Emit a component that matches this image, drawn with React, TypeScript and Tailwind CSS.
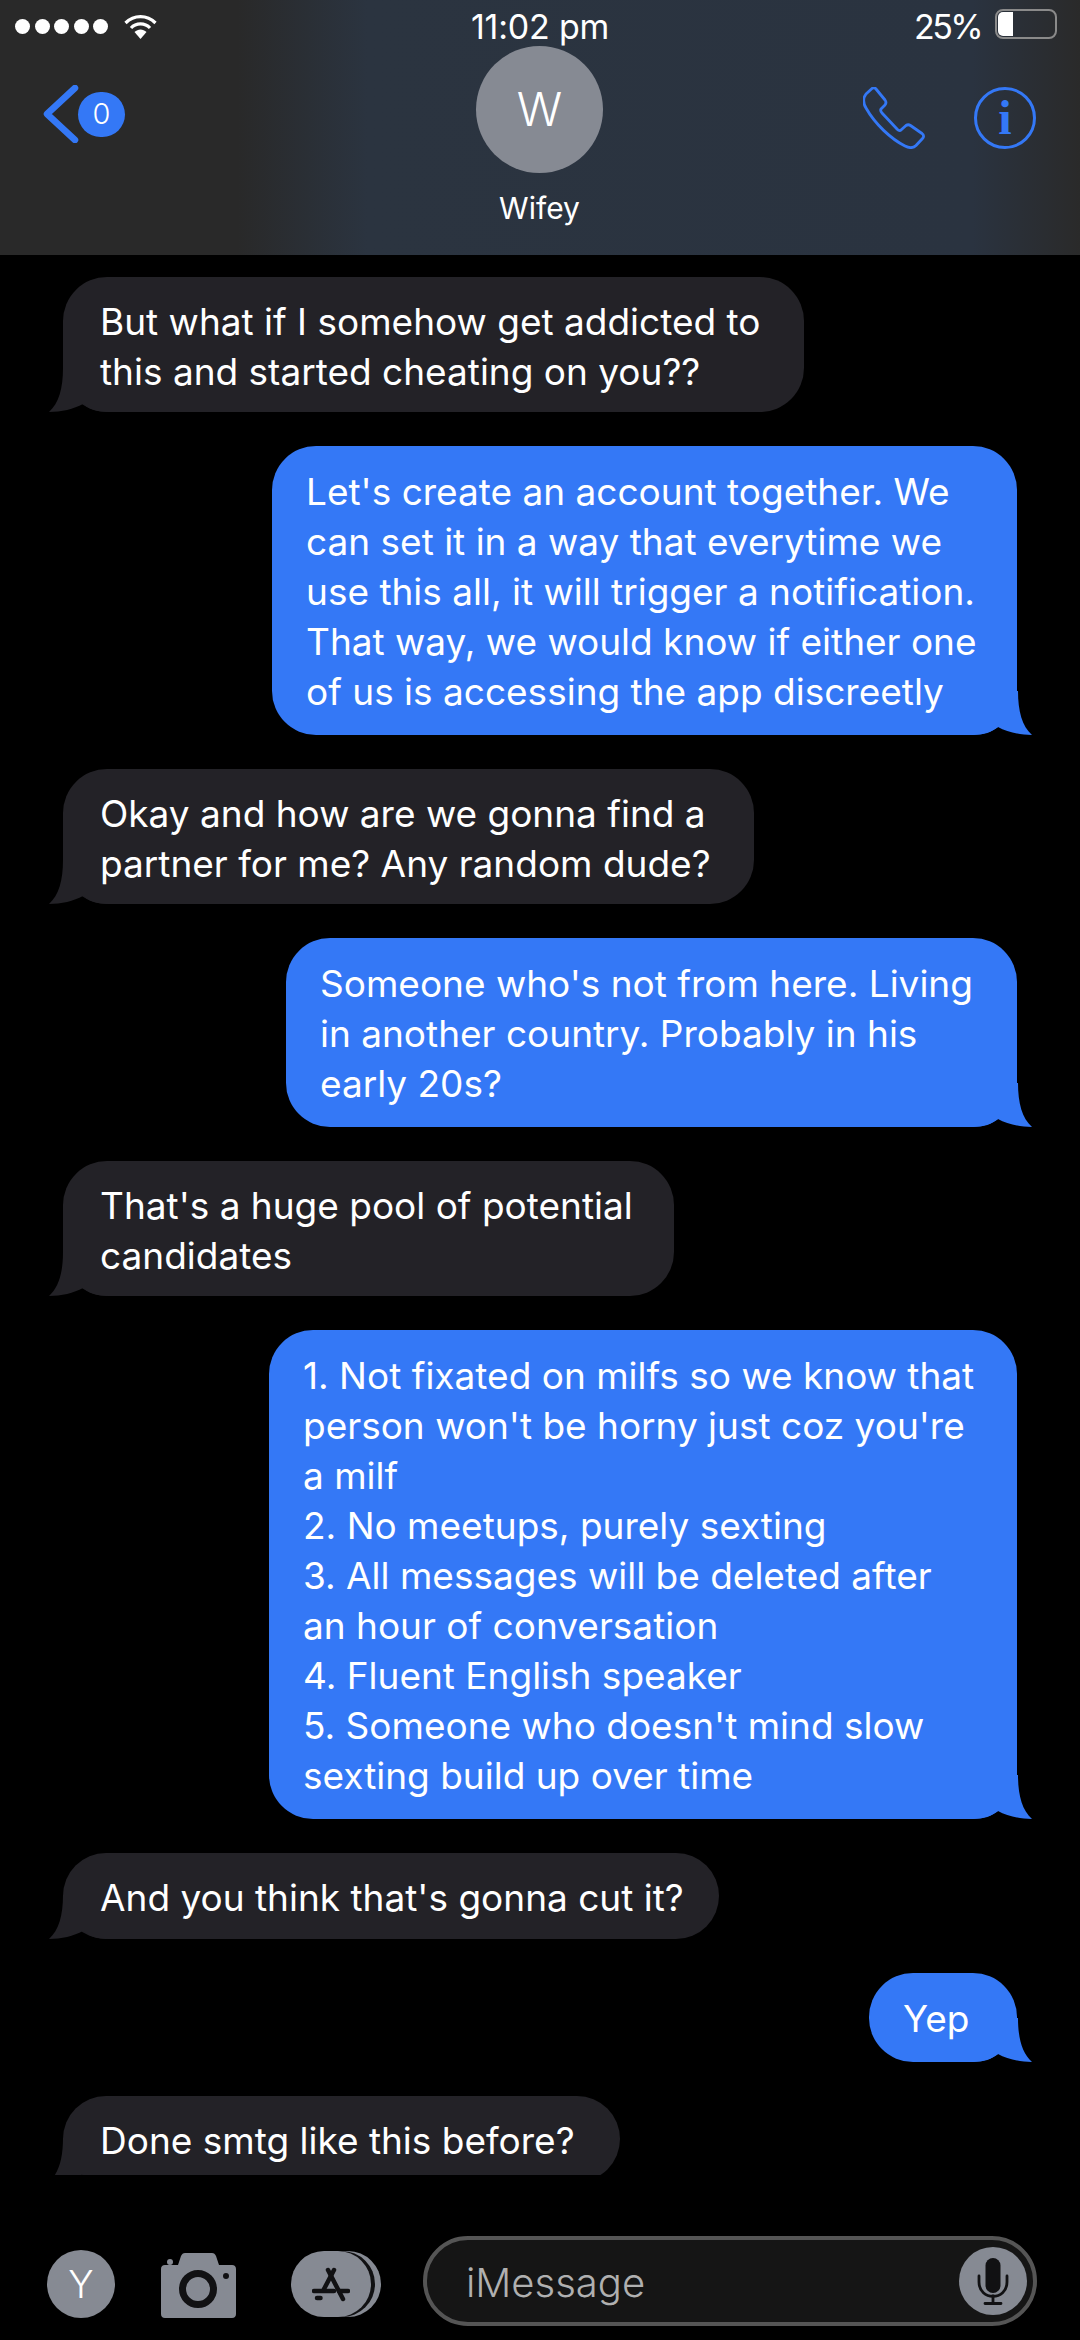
const messages = [
  { id: 1, mine: false, width: "w-[741px]", lines: ["But what if I somehow get addicted to", "this and started cheating on you??"] },
  {
    id: 2,
    mine: true,
    width: "w-[745px]",
    lines: [
      "Let's create an account together. We",
      "can set it in a way that everytime we",
      "use this all, it will trigger a notification.",
      "That way, we would know if either one",
      "of us is accessing the app discreetly",
    ],
  },
  { id: 3, mine: false, width: "w-[691px]", lines: ["Okay and how are we gonna find a", "partner for me? Any random dude?"] },
  { id: 4, mine: true, width: "w-[731px]", lines: ["Someone who's not from here. Living", "in another country. Probably in his", "early 20s?"] },
  { id: 5, mine: false, width: "w-[611px]", lines: ["That's a huge pool of potential", "candidates"] },
  {
    id: 6,
    mine: true,
    width: "w-[748px]",
    lines: [
      "1. Not fixated on milfs so we know that",
      "person won't be horny just coz you're",
      "a milf",
      "2. No meetups, purely sexting",
      "3. All messages will be deleted after",
      "an hour of conversation",
      "4. Fluent English speaker",
      "5. Someone who doesn't mind slow",
      "sexting build up over time",
    ],
  },
  { id: 7, mine: false, width: "w-[656px]", lines: ["And you think that's gonna cut it?"] },
  { id: 8, mine: true, width: "w-[148px]", lines: ["Yep"] },
  { id: 9, mine: false, width: "w-[557px]", lines: ["Done smtg like this before?"] },
];

const Tail = ({ mine }: { mine: boolean }) => (
  <svg
    viewBox="0 0 60 44"
    className={`absolute bottom-0 h-[44px] w-[60px] ${mine ? "right-[-15px] -scale-x-100" : "left-[-14px]"}`}
    fill={mine ? "#3478f6" : "#232227"}
  >
    <path d="M14 0C14 20 10 35 0 44C12 44 25 41 34 36C40 41 48 44 60 44V0Z" />
  </svg>
);

const Bubble = ({ mine, width, lines }: { mine: boolean; width: string; lines: string[] }) => (
  <div
    className={`relative shrink-0 rounded-[44px] ${width} ${
      mine
        ? "self-end bg-[#3478f6] pb-[18px] pl-[34px] pt-[21px]"
        : "min-h-[86px] self-start bg-[#232227] pb-[15px] pl-[37px] pt-[20px]"
    }`}
  >
    {lines.map((line) => (
      <div key={line} className="relative z-10 whitespace-nowrap">
        {line}
      </div>
    ))}
    <Tail mine={mine} />
  </div>
);

const StatusBar = () => (
  <div className="relative flex h-[46px] items-start justify-between pl-[15px] pr-[23px] text-[34px] leading-[42px] tracking-[-0.2px]">
    <div className="flex items-center gap-[16px] pt-[14px]">
      <div className="flex gap-[4.5px]">
        {[1, 2, 3, 4, 5].map((dot) => (
          <div key={dot} className="h-[15px] w-[15px] rounded-full bg-white" />
        ))}
      </div>
      <svg viewBox="0 0 33 25" className="h-[25px] w-[33px]" fill="none" stroke="#fff" strokeWidth="3.2">
        <path d="M1.5 9C10 0.5 23 0.5 31.5 9" />
        <path d="M7 14C12 8.5 21 8.5 26 14" />
        <path d="M10.5 18C14 14.5 19 14.5 22.5 18L16.5 25Z" fill="#fff" stroke="none" />
      </svg>
    </div>
    <div className="absolute left-0 right-0 top-[6px] text-center">11:02 pm</div>
    <div className="flex items-start gap-[14px]">
      <span className="mt-[6px] tracking-[-2.6px]">25%</span>
      <div className="mt-[9px] h-[30px] w-[62px] rounded-[8px] border-[2px] border-[#8a8a8a] p-[1px]">
        <div className="h-full w-[15px] rounded-l-[5px] bg-white" />
      </div>
    </div>
  </div>
);

const NavRow = () => (
  <div className="grid grid-cols-[1fr_127px_1fr] pl-[43px] pr-[44px]">
    <div className="flex items-center self-start pt-[39px]">
      <svg viewBox="0 0 36 58" className="h-[58px] w-[36px]" fill="none" stroke="#3478f6" strokeWidth="6.5" strokeLinecap="round" strokeLinejoin="round">
        <path d="M32 3L4 29L32 55" />
      </svg>
      <div className="-ml-[1px] flex h-[45px] w-[47px] items-center justify-center rounded-full bg-[#3478f6] text-[29px] font-light">0</div>
    </div>
    <div className="flex flex-col items-center">
      <div className="flex h-[127px] w-[127px] items-center justify-center rounded-full bg-[#868a93] text-[47px] font-light">W</div>
      <div className="mt-[15px] whitespace-nowrap text-[30px] leading-[40px]">Wifey</div>
    </div>
    <div className="flex items-start justify-end gap-[49px] pt-[41px]">
      <svg viewBox="0 0 62 62" className="h-[62px] w-[62px]" fill="none" stroke="#3478f6" strokeWidth="2.8" strokeLinejoin="round">
        <path d="M9 1.5C10 0.5 12 0.5 13 2L22 13C23.5 15 23.5 16 22 18L18 22C17.5 23 18 25 19 26L34 42C35 43.5 37 44 38 43L43 38.5C44.5 37.5 46 37.5 47.5 38.5L59 46.5C61 48 61 50 59.5 51.5L53 58.5C50 61.5 46 61 42 59C28 52 12 37 3 21C0 16 0 11 3 7Z" />
      </svg>
      <div className="flex h-[62px] w-[62px] items-center justify-center rounded-full border-[3px] border-[#3478f6] font-['Liberation_Serif',serif] text-[48px] font-bold text-[#3478f6]">
        i
      </div>
    </div>
  </div>
);

const ComposerBar = () => (
  <div className="flex h-[165px] items-start pl-[47px] pr-[43px] pt-[61px]">
    <div className="mt-[14px] flex h-[68px] w-[68px] items-center justify-center rounded-full bg-[#868a93] text-[38px] font-light">Y</div>
    <svg viewBox="0 0 75 65" className="ml-[46px] mt-[17px] h-[65px] w-[75px]" fill="#868a93">
      <path d="M24 0H51C53 0 54 1 55 3L58 12H71C73.5 12 75 13.5 75 16V61C75 63.5 73.5 65 71 65H4C1.5 65 0 63.5 0 61V16C0 13.5 1.5 12 4 12H17L20 3C21 1 22 0 24 0Z" />
      <circle cx="9" cy="9" r="3" />
      <circle cx="37" cy="36" r="15.5" fill="none" stroke="#111113" strokeWidth="7" />
      <circle cx="65" cy="23" r="3" fill="#111113" />
    </svg>
    <div className="relative ml-[55px] mt-[15px] h-[66px] w-[90px]">
      <div className="absolute left-[10px] top-0 h-[66px] w-[80px] rounded-full bg-[#868a93]" />
      <div className="absolute left-[4px] top-0 h-[66px] w-[80px] rounded-full bg-[#111113]" />
      <div className="absolute left-0 top-0 flex h-[66px] w-[80px] items-center justify-center rounded-full bg-[#868a93]">
        <svg viewBox="0 0 38 35" className="h-[35px] w-[38px]" fill="none" stroke="#111113" strokeWidth="4.5" strokeLinecap="round">
          <path d="M16 3L31 32" />
          <path d="M22 3L12 22" />
          <path d="M2 24H22M27 24H36" />
          <path d="M5 31H8.5" />
        </svg>
      </div>
    </div>
    <div className="ml-[42px] flex h-[90px] flex-1 items-center justify-between rounded-full border-[4px] border-[#555555] bg-[#151515] pl-[39px] pr-[6px]">
      <span className="pt-[3px] text-[40px] font-light text-[#b0b0b0]">iMessage</span>
      <div className="flex h-[68px] w-[68px] items-center justify-center rounded-full bg-[#868a93]">
        <svg viewBox="0 0 32 47" className="h-[47px] w-[32px]" fill="none" stroke="#111113" strokeWidth="2.8" strokeLinecap="round">
          <rect x="8.5" y="0" width="15" height="35" rx="7.5" fill="#111113" stroke="none" />
          <path d="M2 18V24C2 43 30 43 30 24V18" />
          <path d="M16 38V45M8 45.5H24" />
        </svg>
      </div>
    </div>
  </div>
);

const App = () => {
  return (
    <div className="flex h-[2340px] w-[1080px] flex-col overflow-hidden bg-black font-['Inter',sans-serif] text-white">
      <header className="h-[255px] shrink-0 bg-[linear-gradient(90deg,#292929_0%,#292929_22%,#2b3440_34%,#2a3340_90%,#2a2a2a_100%)]">
        <StatusBar />
        <NavRow />
      </header>
      <main className="flex h-[1920px] shrink-0 flex-col gap-[34px] overflow-hidden px-[63px] pt-[22px] text-[37px] leading-[50px]">
        {messages.map((msg) => (
          <Bubble key={msg.id} mine={msg.mine} width={msg.width} lines={msg.lines} />
        ))}
      </main>
      <ComposerBar />
    </div>
  );
};

export default App;
